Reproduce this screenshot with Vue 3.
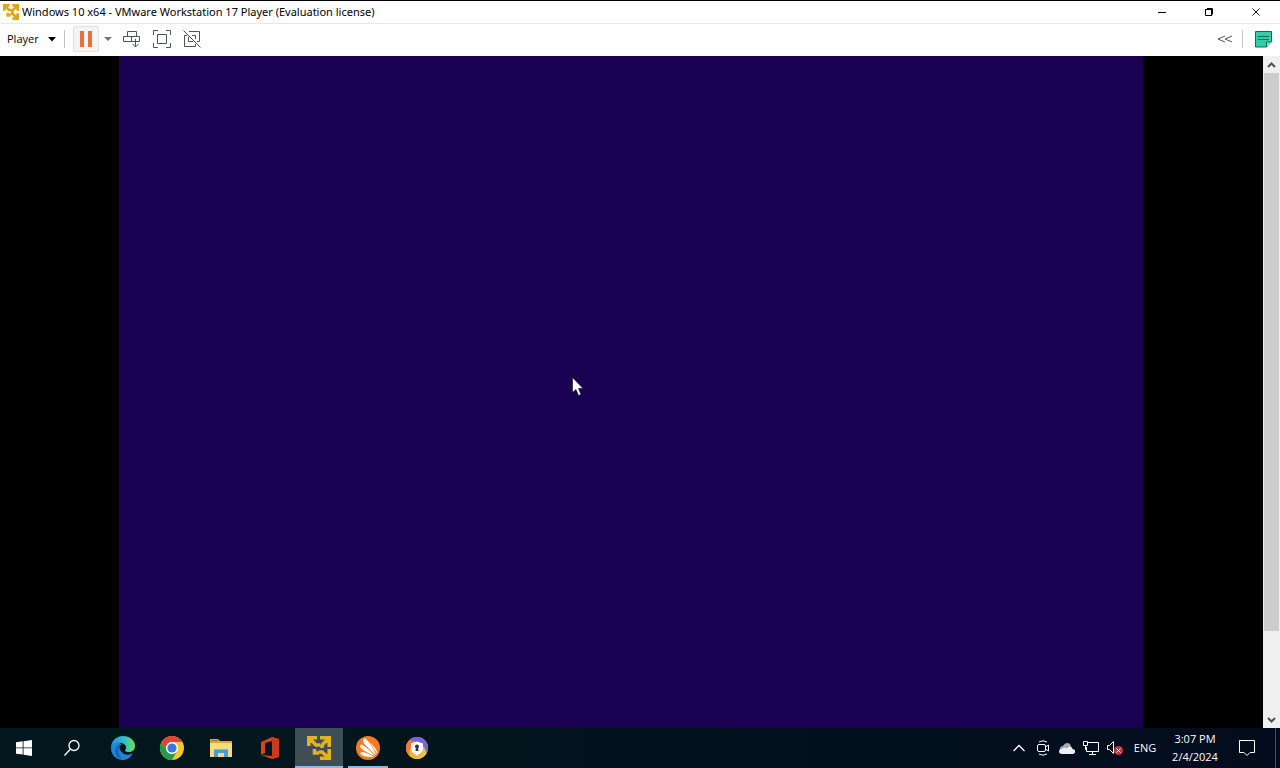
<script setup>
const tray = ['Show hidden icons', 'Meet Now', 'OneDrive', 'Network', 'Volume muted']
</script>

<template>
  <div class="desktop">
    <header class="titlebar">
      <svg class="app-icon" width="16" height="16" viewBox="0 0 24 24">
        <g fill="none" stroke="#dda517" stroke-width="4">
          <path d="M2 10V2h8M2 2l7 7h4M14 2h8v8M22 2l-8 8v3M14 22h8v-8M22 22l-7-7h-4M7 13v4h4" />
        </g>
      </svg>
      <h1>Windows 10 x64 - VMware Workstation 17 Player (Evaluation license)</h1>
      <div class="window-controls">
        <button aria-label="Minimize"><svg width="10" height="10" viewBox="0 0 10 10"><path d="M1 5.5h8" stroke="#000" /></svg></button>
        <button aria-label="Restore"><svg width="10" height="10" viewBox="0 0 10 10" fill="none" stroke="#000"><path d="M1.5 2.5h6v6h-6zM3 1.5h5.500v6" /><path d="M1 2.500h7M7.500 2v7" /></svg></button>
        <button aria-label="Close"><svg width="10" height="10" viewBox="0 0 10 10"><path d="M1.500 1.500l7 7M8.500 1.500l-7 7" stroke="#111" /></svg></button>
      </div>
    </header>

    <nav class="toolbar" aria-label="Virtual machine">
      <button class="player">Player
        <svg width="8" height="5" viewBox="0 0 8 5"><path d="M0 0h8L4 4.500z" fill="#000" /></svg>
      </button>
      <span class="divider"></span>
      <button class="pause" aria-label="Suspend">
        <svg width="12" height="16" viewBox="0 0 12 16"><path d="M0 0h4v16H0zM8 0h4v16H8z" fill="#e8703a" /></svg>
      </button>
      <button class="more" aria-label="Power options"><svg width="8" height="4" viewBox="0 0 8 4"><path d="M0 0h8L4 4z" fill="#777" /></svg></button>
      <button class="tool" aria-label="Send Ctrl+Alt+Del">
        <svg width="18" height="18" viewBox="0 0 18 18" fill="none" stroke="#4d5357">
          <path d="M4.500 6.500v-5h9v5M.500 6.500h16v5H.500zM8.500 6.500v5M12.500 9v8M9.500 14l3 3 3-3" />
        </svg>
      </button>
      <button class="tool" aria-label="Full screen">
        <svg width="18" height="18" viewBox="0 0 18 18" fill="none" stroke="#4d5357">
          <path d="M4.500 4.500h9v9h-9zM.5 5V.5H5M13 .5h4.500V5M17.500 13v4.500H13M5 17.500H.5V13" />
        </svg>
      </button>
      <button class="tool" aria-label="Unity">
        <svg width="18" height="18" viewBox="0 0 18 18" fill="none" stroke="#4d5357">
          <path d="M6 1.500h10.500v10H14M4 5.500H1.500v11h11V14M.5.500l17 17M5.500 7v4.500H10M12.500 9V5.500H9" />
        </svg>
      </button>
      <button class="collapse" aria-label="Collapse toolbar">
        <svg width="16" height="8" viewBox="0 0 16 8" fill="none" stroke="#555"><path d="M8 1L1 4l7 3M15 1L8 4l7 3" /></svg>
      </button>
      <span class="divider"></span>
      <button class="note" aria-label="Messages">
        <svg width="17" height="17" viewBox="0 0 17 17" stroke="#1c6257">
          <path d="M.5.500h16v10l-5 5.500H.5z" fill="#31cda5" /><path d="M11.500 16v-5h5" fill="#8be8d0" /><path d="M3 5.500h11M3 8.500h11" fill="none" />
        </svg>
      </button>
    </nav>

    <main class="viewport">
      <div class="guest">
        <div class="screen"></div>
        <svg class="cursor" width="12" height="20" viewBox="0 0 12 20"><path d="M.5.500v15l3.500-3 2.500 6 2.500-1-2.500-6h4.500z" fill="#fff" stroke="#111" stroke-width=".6" /></svg>
      </div>
      <div class="scrollbar" aria-hidden="true">
        <span class="arrow"><svg width="9" height="6" viewBox="0 0 9 6"><path d="M1 5l3.500-3.500L8 5" /></svg></span>
        <span class="track"><span class="thumb"></span></span>
        <span class="arrow"><svg width="9" height="6" viewBox="0 0 9 6"><path d="M1 1l3.500 3.500L8 1" /></svg></span>
      </div>
    </main>

    <footer class="taskbar">
      <button class="task" aria-label="Start">
        <svg width="16" height="16" viewBox="0 0 16 16" fill="#fff"><path d="M0 2.200l6.700-.9v6.200H0zM7.500 1.200L16 0v7.500H7.500zM0 8.300h6.700v6.300L0 13.700zM7.500 8.300H16V16l-8.500-1.200z" /></svg>
      </button>
      <button class="task search" aria-label="Search">
        <svg width="18" height="18" viewBox="0 0 18 18" fill="none" stroke="#fff" stroke-width="1.300"><circle cx="11" cy="6.500" r="5" /><path d="M7.500 10L1.500 16.500" /></svg>
      </button>
      <button class="task" aria-label="Microsoft Edge">
        <svg width="24" height="24" viewBox="0 0 24 24">
          <defs>
            <linearGradient id="edge-top" x1="0" y1=".5" x2="1" y2=".5"><stop offset="0" stop-color="#2496df" /><stop offset=".5" stop-color="#2dbbd0" /><stop offset="1" stop-color="#6ade58" /></linearGradient>
            <linearGradient id="edge-low" x1="0" y1="0" x2="1" y2="1"><stop offset="0" stop-color="#168bdc" /><stop offset="1" stop-color="#2b7fd0" /></linearGradient>
          </defs>
          <path d="M0 12C0 5 5 0 12 0c7 0 12 4.500 12 10 0 4-3 6-6 6-4 0-4.500-1.300-3.500-2.500C17 9 11 6 7 7c-3 .5-6 2-7 5z" fill="url(#edge-top)" />
          <path d="M0 12C1 7 6 5 10 6.500 7 9 8 17 15 18.500c3 .6 5-.3 7-1.500-2 4-5.500 7-10 7C5 24 0 19 0 12z" fill="url(#edge-low)" />
          <path d="M11 8c-4 2-5 9 0 15C4 22 2 14 6 10c1.500-1.600 3-2 5-2z" fill="#1467bd" />
        </svg>
      </button>
      <button class="task" aria-label="Google Chrome">
        <svg width="24" height="24" viewBox="0 0 24 24">
          <circle cx="12" cy="12" r="12" fill="#f4c92d" />
          <path d="M1.600 6A12 12 0 0 1 22.400 6H12a6 6 0 0 0-5.200 9z" fill="#e04436" />
          <path d="M1.600 6A12 12 0 0 0 12 24l5.200-9A6 6 0 0 1 6.800 15z" fill="#249b4c" />
          <circle cx="12" cy="12" r="6" fill="#fff" /><circle cx="12" cy="12" r="4.600" fill="#3679df" />
        </svg>
      </button>
      <button class="task" aria-label="File Explorer">
        <svg width="22" height="18" viewBox="0 0 22 18">
          <path d="M0 0h8l2 2h12v16H0z" fill="#dba936" /><path d="M0 4h22v14H0z" fill="#f8dc82" /><path d="M1 1h7v1H1z" fill="#a87920" />
          <path d="M4 18v-7l2-1h10l2 1v7h-4v-4H8v4z" fill="#459ed5" /><path d="M6 10h10v1H6z" fill="#70bee8" />
        </svg>
      </button>
      <button class="task" aria-label="Office">
        <svg width="20" height="22" viewBox="0 0 20 22"><path d="M1 5L12 0l7 2v18l-7 2-11-4 11 1V4L5 6v10l-4 2z" fill="#d9441d" /><path d="M12 0l7 2v18l-7 2z" fill="#c83c18" /></svg>
      </button>
      <button class="task active" aria-label="VMware Workstation Player">
        <svg width="24" height="24" viewBox="0 0 24 24">
          <g fill="none" stroke="#e2b321" stroke-width="3.600">
            <path d="M1.800 10V1.800H10M2 2l7 7h4M13 1.800h9.200V11M22 2l-7 7v3M13 22.200h9.200V13M22 22l-7-6h-3M7.500 13v4H12" />
          </g>
        </svg>
      </button>
      <button class="task running" aria-label="Avast Antivirus">
        <svg width="24" height="24" viewBox="0 0 24 24"><circle cx="12" cy="12" r="12" fill="#f47b20" />
          <path d="M20.500 19.500C15 15 10 10 7.500 6.500 6 4 8 1.500 10 3 14 7 18 13 20.500 19.500zM19 20C12 17.500 7.500 14.500 5 12c-2-2-.5-4 1.500-3C11 11.500 15 15.500 19 20zM18 20.800c-6 .2-10-.3-12.500-1.800-2-1.500-.8-3.500 1.200-3 4 1 7.500 2.500 11.300 4.800zM21.500 18C18 13 15.500 9 14 6l3 3.500c2.500 3 4 5 4.500 8.500z" fill="#fff" />
        </svg>
      </button>
      <button class="task" aria-label="Avast Secure Browser">
        <svg width="22" height="22" viewBox="0 0 22 22"><circle cx="11" cy="11" r="11" fill="#f1b632" />
          <path d="M3 3.400A11 11 0 0 1 22 11c0 2-.5 4-1.500 5.500C20 10 15 5 3 3.400z" fill="#7964dc" /><path d="M3 3.400A11 11 0 0 0 4 19.500C2 13 5 7 12 6z" fill="#ee7b3b" /><path d="M20.500 16.500A11 11 0 0 1 7 21.200c6 0 10-4 10-10z" fill="#e8c545" />
          <path d="M11 4.500l6 2v5c0 3-2.500 5-6 7-3.500-2-6-4-6-7v-5z" fill="#fff" /><circle cx="11" cy="9.500" r="2" fill="#35334f" /><path d="M10 10h2l.5 4h-3z" fill="#35334f" />
        </svg>
      </button>

      <div class="tray">
        <button :aria-label="tray[0]"><svg width="14" height="8" viewBox="0 0 14 8" fill="none" stroke="#fff" stroke-width="1.300"><path d="M1.500 7L7 1.500 12.500 7" /></svg></button>
        <button :aria-label="tray[1]"><svg width="14" height="16" viewBox="0 0 14 16" fill="none" stroke="#fff"><rect x="1.500" y="4.500" width="8" height="7" rx="1.500" /><path d="M9.500 7l3-2v6l-3-2M3 2q4-2.500 8 0M3 14q4 2.500 8 0" /></svg></button>
        <button :aria-label="tray[2]"><svg width="16" height="11" viewBox="0 0 16 11"><path d="M1 8C0 5 2 3 4 3c2-4 7-4 8 0l-5 6z" fill="#aaa" /><path d="M3 11c-4 0-4-5 0-5 2-2 4-1 5-.5 3-3.500 5-1.500 5.500.5 3.500 0 3.500 5 0 5z" fill="#eee" /></svg></button>
        <button :aria-label="tray[3]"><svg width="18" height="14" viewBox="0 0 18 14" fill="none" stroke="#fff"><path d="M5 1.500h11.500v9h-12V6M10.500 10.500v3M7 13.500h7" /><path d="M1.500.500h4v4h-4zM3.500 4.500v4h1" /></svg></button>
        <button :aria-label="tray[4]"><svg width="18" height="16" viewBox="0 0 18 16" fill="none" stroke="#fff"><path d="M1.500 5.500h2l4-4v12l-4-4h-2z" /><circle cx="12.500" cy="10.500" r="4.500" fill="#c8323e" stroke="none" /><path d="M10.500 8.500l4 4M14.500 8.500l-4 4" /></svg></button>
        <button class="lang">ENG</button>
        <button class="clock"><time>3:07 PM</time><time>2/4/2024</time></button>
        <button class="action" aria-label="Notifications"><svg width="16" height="16" viewBox="0 0 16 16" fill="none" stroke="#fff"><path d="M.5.500h15v12H11l-3 3-3-3H.5z" /></svg></button>
        <button class="peek" aria-label="Show desktop"></button>
      </div>
    </footer>
  </div>
</template>

<style>
body { margin: 0; background: #000; }
</style>

<style scoped>
.desktop {
  display: flex;
  flex-direction: column;
  height: 100vh;
  font: 11px/16px "Open Sans", "Noto Sans", sans-serif;
  color: #000;
}
button {
  display: flex;
  align-items: center;
  justify-content: center;
  flex: none;
  margin: 0;
  padding: 0;
  border: 0;
  background: none;
  font: inherit;
  color: inherit;
}
svg { display: block; flex: none; }
.titlebar {
  display: flex;
  align-items: center;
  height: 22px;
  padding: 0 1px 0 3px;
  border-top: 1px solid #000;
  background: #fff;
}
h1 {
  margin: 0 auto 0 3px;
  font: 400 11px/16px "Noto Sans", "Open Sans", sans-serif;
  white-space: nowrap;
}
.window-controls { display: flex; align-self: stretch; }
.window-controls button { width: 47px; }
.toolbar {
  display: flex;
  align-items: center;
  box-sizing: border-box;
  height: 33px;
  padding: 0 8px 2px 7px;
  border-top: 1px solid #e8e8e8;
  background: #fff;
}
.player { gap: 9px; }
.divider { width: 1px; height: 18px; margin: 0 8px; background: #c4c4c4; }
.pause {
  box-sizing: border-box;
  width: 26px;
  height: 26px;
  border: 1px solid #e2e2e2;
  border-radius: 2px;
  background: #f5f4f3;
}
.more { width: 18px; height: 26px; }
.tool { width: 30px; height: 26px; }
.collapse { margin-left: auto; width: 18px; height: 26px; }
.note { margin-left: 4px; }
.viewport { display: flex; flex: 1; min-height: 0; }
.guest {
  position: relative;
  display: flex;
  justify-content: center;
  flex: 1;
  padding-right: 1px;
  background: #000;
}
.screen { width: 81.200%; background: #190053; }
.cursor { position: absolute; left: 572px; top: 321px; }
.scrollbar {
  display: flex;
  flex-direction: column;
  width: 17px;
  background: #f0f0f0;
}
.arrow { display: flex; align-items: center; justify-content: center; height: 17px; }
.arrow path { fill: none; stroke: #505050; stroke-width: 2; }
.track { flex: 1; }
.thumb { display: block; height: 87.500%; margin: 0 1px; background: #cdcdcd; }
.taskbar {
  display: flex;
  gap: 1px;
  height: 40px;
  background: linear-gradient(90deg, #03171e, #02151c 35%, #02101d 65%, #020c1d);
  color: #fff;
}
.task { width: 48px; }
.search { margin-left: -1px; margin-right: 2px; }
.active { background: #3d4e56; box-shadow: inset 0 -2px #82bce8; }
.running {
  background: linear-gradient(#82bce8, #82bce8) center bottom / 40px 2px no-repeat;
}
.tray { display: flex; margin-left: auto; }
.tray button { width: 24px; }
.tray .lang { width: 36px; }
.tray .clock { flex-direction: column; width: 64px; line-height: 18px; }
.tray .action { width: 40px; margin-right: 8px; }
.tray .peek { width: 5px; border-left: 1px solid #46505c; }
</style>
